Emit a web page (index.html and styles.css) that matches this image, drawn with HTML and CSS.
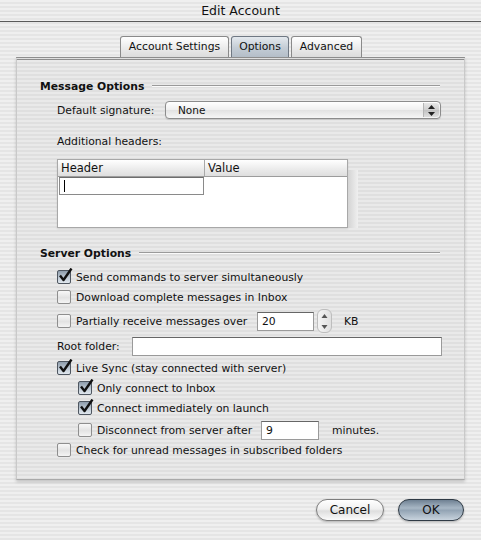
FILE: index.html
```html
<!DOCTYPE html>
<html lang="en">
<head>
  <meta charset="UTF-8" />
  <title>Edit Account</title>
  <link rel="stylesheet" href="styles.css">
</head>
<body>
  <div class="window">
    <div class="titlebar">Edit Account</div>

    <div class="tabs">
      <div class="tab">Account Settings</div>
      <div class="tab active">Options</div>
      <div class="tab">Advanced</div>
    </div>

    <div class="panel">
      <div class="group-title"><span>Message Options</span><i class="rule"></i></div>

      <div class="row indent sig-row">
        <span class="label sig-label">Default signature:</span>
        <div class="popup">
          <span>None</span>
          <span class="popup-arrows">
            <svg width="7" height="11" viewBox="0 0 7 11"><path d="M3.5 0 L7 4 L0 4 Z M0 7 L7 7 L3.5 11 Z" fill="#222"/></svg>
          </span>
        </div>
      </div>

      <div class="row indent small-row headers-label">Additional headers:</div>

      <div class="table-wrap">
        <div class="table">
          <div class="thead">
            <div class="th col-header">Header</div>
            <div class="th col-value">Value</div>
          </div>
          <div class="tbody">
            <div class="cell-edit"><span class="caret"></span></div>
          </div>
        </div>
        <div class="scroll-shade"></div>
      </div>

      <div class="group-title server-title"><span>Server Options</span><i class="rule"></i></div>

      <div class="options">
        <div class="row indent">
          <span class="check on"><svg width="16" height="16" viewBox="0 0 16 16"><path d="M3 7.5 L6.5 12 L14.5 0.5" fill="none" stroke="#111" stroke-width="2.4" stroke-linejoin="round"/></svg></span>
          <span>Send commands to server simultaneously</span>
        </div>
        <div class="row indent">
          <span class="check"></span>
          <span>Download complete messages in Inbox</span>
        </div>
        <div class="row field-row indent partial-row">
          <span class="check"></span>
          <span class="partial-text">Partially receive messages over</span>
          <span class="input kb-input">20</span>
          <span class="stepper">
            <svg width="7" height="17" viewBox="0 0 7 17"><path d="M3.5 1 L6.5 5 L0.5 5 Z M0.5 12 L6.5 12 L3.5 16 Z" fill="#555"/></svg>
          </span>
          <span class="unit-kb">KB</span>
        </div>
        <div class="row field-row indent root-row">
          <span class="label root-label">Root folder:</span>
          <span class="input root-input"></span>
        </div>
        <div class="row indent">
          <span class="check on"><svg width="16" height="16" viewBox="0 0 16 16"><path d="M3 7.5 L6.5 12 L14.5 0.5" fill="none" stroke="#111" stroke-width="2.4" stroke-linejoin="round"/></svg></span>
          <span>Live Sync (stay connected with server)</span>
        </div>
        <div class="row sub">
          <span class="check on"><svg width="16" height="16" viewBox="0 0 16 16"><path d="M3 7.5 L6.5 12 L14.5 0.5" fill="none" stroke="#111" stroke-width="2.4" stroke-linejoin="round"/></svg></span>
          <span>Only connect to Inbox</span>
        </div>
        <div class="row sub">
          <span class="check on"><svg width="16" height="16" viewBox="0 0 16 16"><path d="M3 7.5 L6.5 12 L14.5 0.5" fill="none" stroke="#111" stroke-width="2.4" stroke-linejoin="round"/></svg></span>
          <span>Connect immediately on launch</span>
        </div>
        <div class="row field-row sub">
          <span class="check"></span>
          <span class="disc-text">Disconnect from server after</span>
          <span class="input min-input">9</span>
          <span class="unit-min">minutes.</span>
        </div>
        <div class="row indent last-row">
          <span class="check"></span>
          <span>Check for unread messages in subscribed folders</span>
        </div>
      </div>
    </div>

    <div class="footer">
      <button class="btn">Cancel</button>
      <button class="btn default">OK</button>
    </div>
  </div>
</body>
</html>
```

FILE: styles.css
```css
body {
  margin: 0;
  font-family: "DejaVu Sans", Verdana, sans-serif;
  font-size: 10.8px;
  color: #111;
}

.window {
  width: 481px;
  height: 540px;
  background: repeating-linear-gradient(180deg, #efefef 0 2px, #e5e5e5 2px 4px);
  overflow: hidden;
  white-space: nowrap;
}

.titlebar {
  height: 21px;
  line-height: 22px;
  text-align: center;
  font-size: 12.5px;
  border-bottom: 1px solid #5a5a5a;
}

/* tabs */
.tabs {
  display: flex;
  justify-content: center;
  gap: 2px;
  margin-top: 14px;
  height: 21px;
  padding-left: 1px;
}

.tab {
  height: 20px;
  line-height: 20px;
  padding: 0 8px;
  border: 1px solid #8a8a8a;
  border-bottom: none;
  border-radius: 3px 3px 0 0;
  background: linear-gradient(180deg, #ffffff, #e9e9e9 60%, #dcdcdc);
}

.tab.active {
  background: linear-gradient(180deg, #e4e9ee, #c3ccd5 55%, #b4bec8);
  border-color: #6f7883;
  padding: 0 7px;
}

/* panel */
.panel {
  margin: 0 16px;
  height: 423px;
  box-sizing: border-box;
  border-top: 3px double #8d8d8d;
  border-left: 1px solid #c9c9c9;
  border-right: 1px solid #c9c9c9;
  border-bottom: 1px solid #a9a9a9;
  box-shadow: 0 2px 3px rgba(0, 0, 0, 0.18);
  background: rgba(0, 0, 0, 0.025);
  padding: 18px 24px 0 23px;
}

.group-title {
  display: flex;
  align-items: center;
  height: 16px;
  font-weight: bold;
}

.group-title .rule {
  flex: 1;
  margin-left: 8px;
  height: 0;
  border-top: 1px solid #9a9a9a;
  border-bottom: 1px solid #fafafa;
}

.server-title {
  margin-top: 17px;
}

.row {
  display: flex;
  align-items: center;
  height: 20px;
}

.row > span {
  flex: none;
}

.indent {
  padding-left: 17px;
}

.sub {
  padding-left: 38px;
}

.small-row {
  height: 16px;
}

.sig-row {
  margin-top: 6px;
}

.headers-label {
  margin-top: 13px;
}

.sig-label {
  width: 108px;
}

.popup {
  flex: none;
  box-sizing: border-box;
  width: 276px;
  height: 18px;
  border: 1px solid #8c8c8c;
  border-radius: 4px;
  background: linear-gradient(180deg, #ffffff, #efefef 50%, #e2e2e2 51%, #f6f6f6);
  display: flex;
  align-items: center;
  justify-content: space-between;
  padding-left: 12px;
  box-shadow: 0 1px 1px rgba(0, 0, 0, 0.12);
  font-size: 10.5px;
}

.popup-arrows {
  width: 15px;
  height: 14px;
  margin-right: 1px;
  border-left: 1px solid #b5b5b5;
  border-radius: 0 3px 3px 0;
  background: linear-gradient(180deg, #e8e8e8, #cfcfcf 50%, #c2c2c2 51%, #dedede);
  display: flex;
  align-items: center;
  justify-content: center;
}

/* headers table */
.table-wrap {
  display: flex;
  margin-top: 10px;
  margin-left: 17px;
}

.table {
  width: 291px;
  height: 69px;
  box-sizing: border-box;
  border: 1px solid #a8a8a8;
  background: #fff;
  box-shadow: 0 1px 2px rgba(0, 0, 0, 0.1);
}

.thead {
  display: flex;
  height: 16px;
  border-bottom: 1px solid #9c9c9c;
  background: linear-gradient(180deg, #ffffff, #ececec 55%, #dedede);
  font-size: 11.5px;
}

.th {
  line-height: 17px;
  padding-left: 3px;
}

.col-header {
  width: 143px;
  border-right: 1px solid #a9a9a9;
}

.tbody {
  padding: 0 0 0 1px;
}

.cell-edit {
  width: 143px;
  height: 16px;
  border: 1px solid #8a8a8a;
  border-top-color: #6d6d6d;
  display: flex;
  align-items: center;
}

.caret {
  width: 1px;
  height: 12px;
  margin-left: 4px;
  background: #000;
}

.scroll-shade {
  width: 10px;
  height: 58px;
  margin-top: 11px;
  background: linear-gradient(90deg, #d4d4d4, #efefef);
}

/* server options */
.options {
  margin-top: 6px;
}

.check {
  width: 12px;
  height: 12px;
  margin-right: 5px;
  border: 1px solid #8e8e8e;
  border-radius: 2px;
  background: linear-gradient(180deg, #f8f8f8, #e3e3e3 55%, #f4f4f4);
  position: relative;
}

.check.on {
  border-color: #4e5660;
  background: linear-gradient(180deg, #8d9cab, #bfcad5 55%, #e0e7ee);
}

.check svg {
  position: absolute;
  left: -1px;
  top: -3px;
}

.field-row {
  height: 24px;
}

.partial-row {
  margin-top: 2px;
}

.root-row {
  margin-top: 1px;
}

.last-row {
  margin-top: -2px;
}

.partial-text {
  width: 181px;
}

.disc-text {
  width: 164px;
}

.input {
  height: 17px;
  line-height: 17px;
  border: 1px solid #9a9a9a;
  border-top-color: #666;
  background: #fff;
  padding-left: 4px;
}

.kb-input {
  width: 51px;
}

.stepper {
  width: 13px;
  height: 22px;
  margin-left: 3px;
  border: 1px solid #bdbdbd;
  border-radius: 6px;
  background: linear-gradient(90deg, #f4f4f4, #e0e0e0);
  display: flex;
  align-items: center;
  justify-content: center;
}

.unit-kb {
  margin-left: 12px;
}

.root-label {
  width: 75px;
}

.root-input {
  width: 304px;
}

.min-input {
  width: 52px;
}

.unit-min {
  margin-left: 13px;
}

/* footer buttons */
.footer {
  display: flex;
  justify-content: flex-end;
  gap: 14px;
  padding: 19px 17px 0 0;
}

.btn {
  font-family: "DejaVu Sans", Verdana, sans-serif;
  font-size: 12px;
  height: 22px;
  border-radius: 11px;
  border: 1px solid #7d7d7d;
  background: linear-gradient(180deg, #ffffff, #f0f0f0 45%, #dedede 55%, #fbfbfb);
  box-shadow: 0 1px 2px rgba(0, 0, 0, 0.25);
  color: #111;
  padding: 0;
}

.btn:first-child {
  width: 68px;
}

.btn.default {
  width: 66px;
  border-color: #2f3a45;
  background: linear-gradient(180deg, #6f8193, #a8b7c5 40%, #93a4b4 52%, #c8d3dd);
}
```
